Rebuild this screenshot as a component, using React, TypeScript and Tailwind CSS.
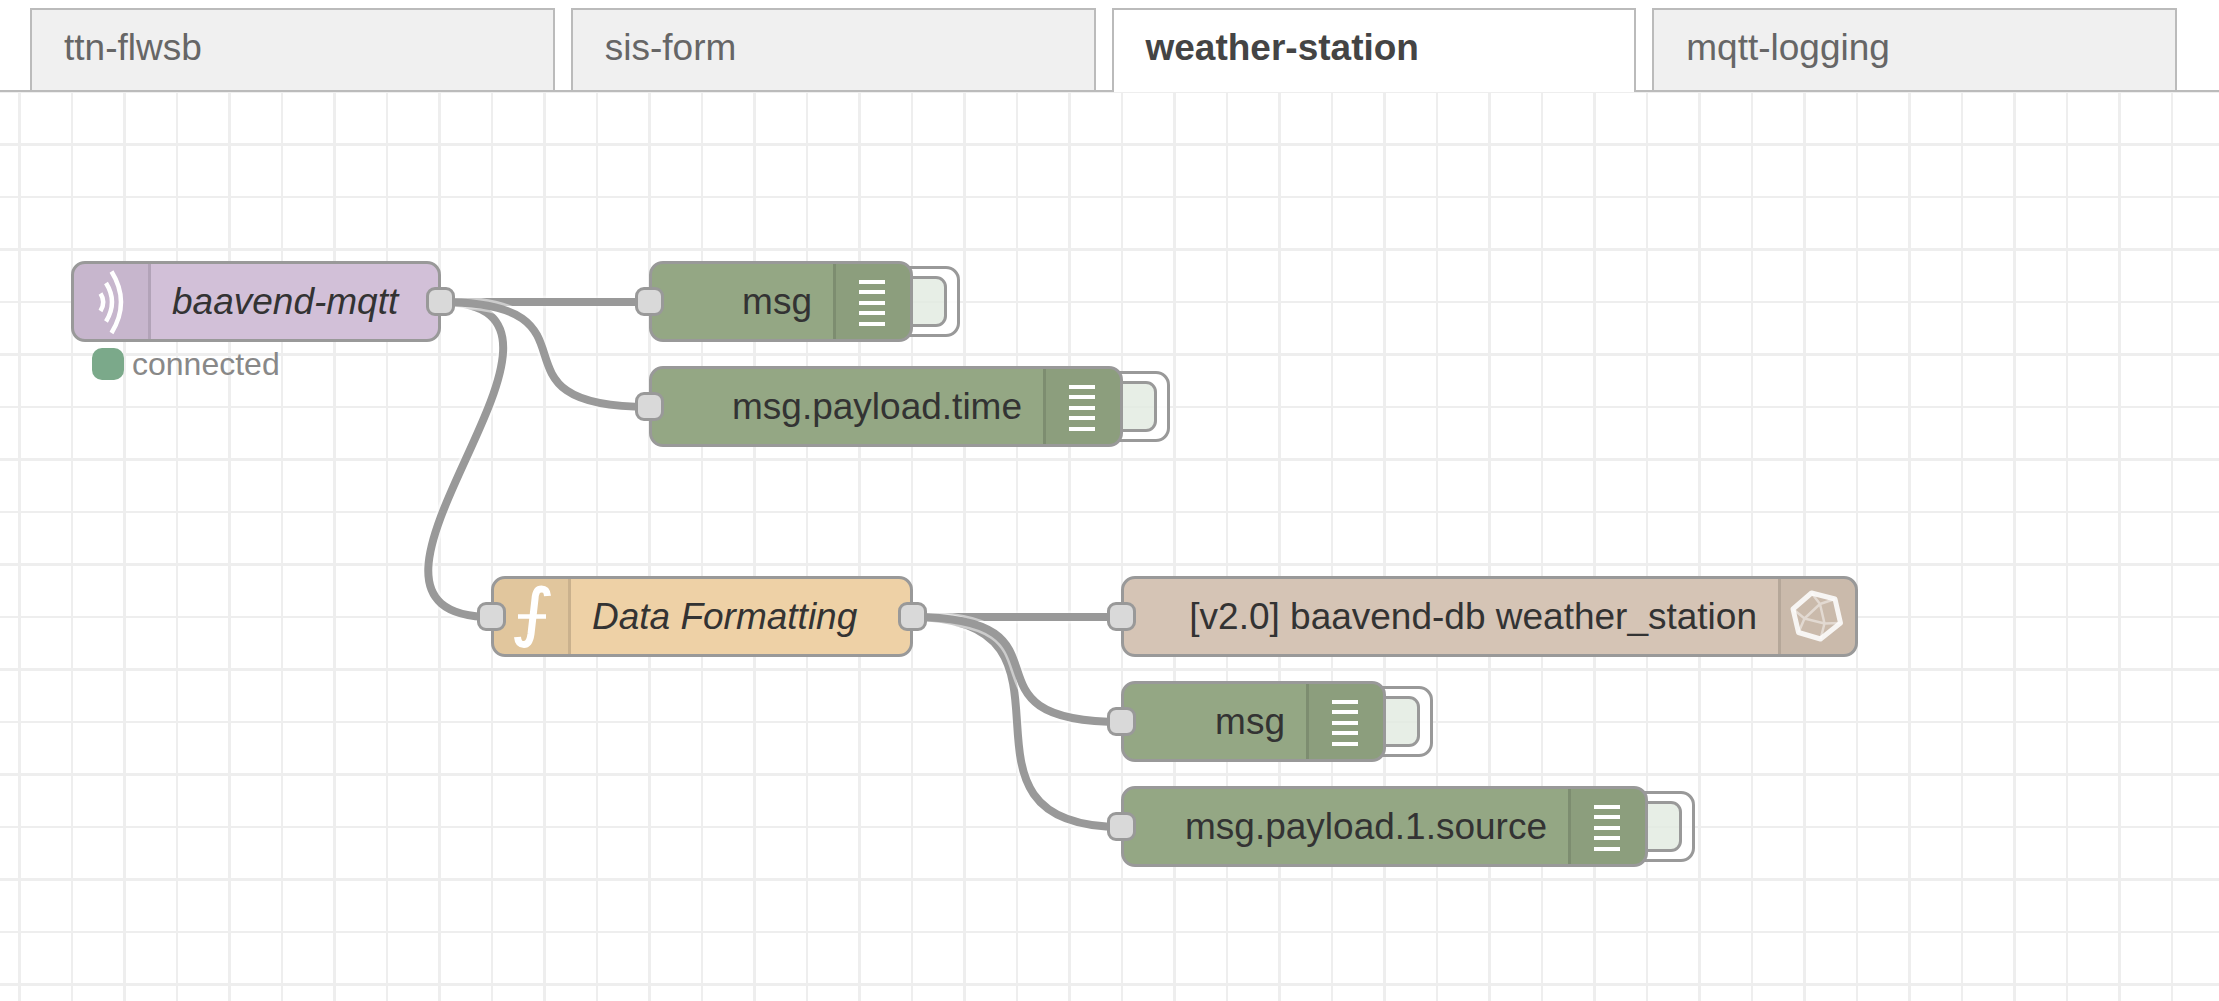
import type { CSSProperties, ReactNode } from "react";

const tabs = [
  { label: "ttn-flwsb", active: false },
  { label: "sis-form", active: false },
  { label: "weather-station", active: true },
  { label: "mqtt-logging", active: false },
];

const wires = [
  "M440 210 C636 210 295 525 492 525",
  "M440 210 H649",
  "M440 210 C616 210 473 315 649 315",
  "M912 525 H1122",
  "M912 525 C1109 525 925 735 1122 735",
  "M912 525 C1088 525 946 630 1122 630",
];

function MqttIcon() {
  return (
    <svg viewBox="0 0 74 75" className="h-[75px] w-[74px]" fill="none" stroke="#fff" strokeWidth="4.5">
      <path d="M26.5 29.5 Q32 38 26.5 47" />
      <path d="M32 19 Q44 38 32 57.5" />
      <path d="M37.5 7.5 Q56.5 38 37.5 69" />
    </svg>
  );
}

function FunctionIcon() {
  return (
    <svg viewBox="0 0 74 75" className="h-[75px] w-[74px]" fill="none" stroke="#fff">
      <path d="M24 37.5H52" strokeWidth="4.5" />
      <path d="M53.5 17C53 11.5 51 10 47.5 10C43 10 41.5 13 41 20L37 55C36 62 34 65.5 30 65.5C26 65.5 24 63.5 23.5 58" strokeWidth="7" />
    </svg>
  );
}

function DebugIcon() {
  return (
    <svg viewBox="0 0 74 75" className="h-[75px] w-[74px]" stroke="#fff" strokeWidth="4">
      <path d="M23 18H49M23 28H49M23 39H49M23 49H49M23 60H49" />
    </svg>
  );
}

function InfluxIcon() {
  return (
    <svg viewBox="0 0 74 75" className="h-[75px] w-[74px]" fill="none" stroke="#fff" strokeLinejoin="round">
      <path d="M30.5 14L54 20L59.5 44L39.5 60L17.5 53.5L12 30Z" strokeWidth="5" strokeOpacity="0.85" />
      <path
        d="M39 25L23.5 39.5L43.5 44.5ZM30.5 14L39 25L54 20M12 30L23.5 39.5L17.5 53.5M59.5 44L43.5 44.5L39.5 60"
        strokeWidth="2.5"
        strokeOpacity="0.45"
      />
    </svg>
  );
}

function Port({ side }: { side: "left" | "right" }) {
  return (
    <span
      className={`absolute top-[26px] size-[29px] rounded-[9px] border-[3px] border-[#999] bg-[#d9d9d9] ${
        side === "left" ? "-left-3.5" : "-right-3.5"
      }`}
    />
  );
}

type FlowNodeProps = {
  x: number;
  y: number;
  width: number;
  label: string;
  fill: string;
  icon: ReactNode;
  iconSide?: "left" | "right";
  italic?: boolean;
  input?: boolean;
  output?: boolean;
  toggle?: boolean;
};

function FlowNode({ x, y, width, label, fill, icon, iconSide = "right", italic, input, output, toggle }: FlowNodeProps) {
  const place: CSSProperties = { left: x, top: y, width };
  const left = iconSide === "left";
  return (
    <div className="absolute h-[81px]" style={place}>
      {toggle && (
        <button
          type="button"
          aria-label={`Toggle ${label}`}
          className="absolute top-[5px] -right-[47px] flex h-[71px] w-[84px] items-center rounded-[14px] border-[3px] border-[#999] bg-white/80 pr-2.5"
        >
          <span className="h-[51px] w-full rounded-[11px] border-[3px] border-[#999] bg-[#87a980]/20" />
        </button>
      )}
      <div
        className={`relative flex h-full items-center overflow-hidden rounded-[14px] border-[3px] border-[#999] ${fill} ${
          left ? "flex-row" : "flex-row-reverse"
        }`}
      >
        <span
          className={`h-full w-[77px] shrink-0 border-black/10 bg-black/5 ${left ? "border-r-[3px]" : "border-l-[3px]"}`}
        >
          {icon}
        </span>
        <span className={`px-[21px] text-[37px] leading-none whitespace-nowrap text-[#333] ${italic ? "italic" : ""}`}>
          {label}
        </span>
      </div>
      {input && <Port side="left" />}
      {output && <Port side="right" />}
    </div>
  );
}

export default function App() {
  return (
    <div className="flex min-h-screen flex-col bg-white font-['Liberation_Sans',Arial,sans-serif]">
      <nav className="relative flex gap-4 border-b-2 border-[#bbb] pt-2 pr-[42px] pl-[30px]">
        {tabs.map((tab) => (
          <a
            key={tab.label}
            href="#"
            className={`flex flex-1 items-center border-2 border-b-0 border-[#bbb] px-8 text-[37px] leading-none ${
              tab.active ? "z-10 -mb-0.5 h-[84px] bg-white pb-2 font-bold text-[#444]" : "h-[82px] bg-[#f0f0f0] pb-1.5 text-[#666]"
            }`}
          >
            {tab.label}
          </a>
        ))}
      </nav>
      <main className="relative flex-1 overflow-hidden bg-[linear-gradient(to_right,transparent_18px,#eee_18px,#eee_21px,transparent_21px,transparent_71px,#eee_71px,#eee_73px,transparent_73px),linear-gradient(to_bottom,#eee_1px,transparent_1px,transparent_51px,#eee_51px,#eee_54px,transparent_54px,transparent_104px,#eee_104px)] bg-size-[105px_105px]">
        <svg className="absolute top-0 left-0 h-full w-full" fill="none">
          {wires.map((d) => (
            <g key={d}>
              <path d={d} stroke="#fff" strokeWidth="13" strokeOpacity="0.5" />
              <path d={d} stroke="#999" strokeWidth="8" />
            </g>
          ))}
        </svg>
        <FlowNode x={71} y={169} width={370} label="baavend-mqtt" fill="bg-[#d2c0d8]" icon={<MqttIcon />} iconSide="left" italic output />
        <div className="absolute top-[256px] left-[92px] flex items-center gap-2 text-[32px] leading-none text-[#888]">
          <span className="size-8 rounded-[10px] bg-[#7ba98a]" />
          <span>connected</span>
        </div>
        <FlowNode x={649} y={169} width={264} label="msg" fill="bg-[#94a784]" icon={<DebugIcon />} input toggle />
        <FlowNode x={649} y={274} width={474} label="msg.payload.time" fill="bg-[#94a784]" icon={<DebugIcon />} input toggle />
        <FlowNode x={491} y={484} width={422} label="Data Formatting" fill="bg-[#eed1a6]" icon={<FunctionIcon />} iconSide="left" italic input output />
        <FlowNode x={1121} y={484} width={737} label="[v2.0] baavend-db weather_station" fill="bg-[#d5c4b5]" icon={<InfluxIcon />} input />
        <FlowNode x={1121} y={589} width={265} label="msg" fill="bg-[#94a784]" icon={<DebugIcon />} input toggle />
        <FlowNode x={1121} y={694} width={527} label="msg.payload.1.source" fill="bg-[#94a784]" icon={<DebugIcon />} input toggle />
      </main>
    </div>
  );
}
